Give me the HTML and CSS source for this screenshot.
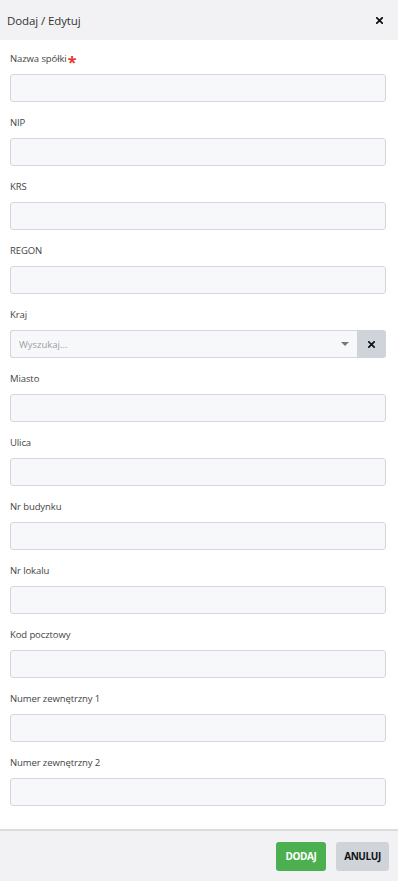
FILE: index.html
```html
<!DOCTYPE html>
<html lang="pl">
<head>
<meta charset="utf-8">
<title>Dodaj / Edytuj</title>
<link rel="stylesheet" href="styles.css">
</head>
<body>
<div class="modal">
  <div class="modal-header">
    <span class="modal-title">Dodaj / Edytuj</span>
    <button class="close-btn" aria-label="Zamknij">
      <svg width="7" height="7" viewBox="0 0 7 7"><path d="M0.8 0.8L6.2 6.2M6.2 0.8L0.8 6.2" stroke="#111" stroke-width="1.8" stroke-linecap="square"/></svg>
    </button>
  </div>
  <div class="modal-body">
    <div class="field"><label class="label">Nazwa spółki<span class="req">*</span></label><input class="input" type="text"></div>
    <div class="field"><label class="label">NIP</label><input class="input" type="text"></div>
    <div class="field"><label class="label">KRS</label><input class="input" type="text"></div>
    <div class="field"><label class="label">REGON</label><input class="input" type="text"></div>
    <div class="field"><label class="label">Kraj</label>
      <div class="select">
        <div class="select-box">
          <span class="placeholder">Wyszukaj...</span>
          <span class="caret"></span>
        </div>
        <button class="select-clear" aria-label="Wyczyść">
          <svg width="7" height="7" viewBox="0 0 7 7"><path d="M0.8 0.8L6.2 6.2M6.2 0.8L0.8 6.2" stroke="#111" stroke-width="1.7" stroke-linecap="square"/></svg>
        </button>
      </div>
    </div>
    <div class="field"><label class="label">Miasto</label><input class="input" type="text"></div>
    <div class="field"><label class="label">Ulica</label><input class="input" type="text"></div>
    <div class="field"><label class="label">Nr budynku</label><input class="input" type="text"></div>
    <div class="field"><label class="label">Nr lokalu</label><input class="input" type="text"></div>
    <div class="field"><label class="label">Kod pocztowy</label><input class="input" type="text"></div>
    <div class="field"><label class="label">Numer zewnętrzny 1</label><input class="input" type="text"></div>
    <div class="field"><label class="label">Numer zewnętrzny 2</label><input class="input" type="text"></div>
  </div>
  <div class="modal-footer">
    <button class="btn btn-primary">DODAJ</button>
    <button class="btn btn-secondary">ANULUJ</button>
  </div>
</div>
</body>
</html>
```
FILE: styles.css
```css
* { box-sizing: border-box; }
html, body { margin: 0; padding: 0; background: #fff; }
body { font-family: "Open Sans", "Noto Sans", sans-serif; color: #333; }

.modal { width: 398px; display: flex; flex-direction: column; }

.modal-header {
  height: 40px;
  background: #f2f2f4;
  display: flex;
  align-items: center;
  justify-content: space-between;
  padding: 0 15px 0 7px;
}
.modal-title { font-size: 11.5px; color: #333; letter-spacing: -0.1px; }
.close-btn {
  border: 0; background: none; padding: 0; width: 7px; height: 7px;
  display: flex; align-items: center; justify-content: center; cursor: pointer;
}

.modal-body { padding: 12px 12px 9px 10px; }

.field { display: flex; flex-direction: column; margin-bottom: 14px; }
.label {
  font-size: 9.5px; line-height: 14px; height: 14px; color: #444;
  margin-bottom: 8px; letter-spacing: -0.1px;
  display: flex; align-items: center;
}
.req {
  color: #e8322d; font-weight: 700; font-size: 16px; margin-left: 1px;
  line-height: 14px; height: 14px; display: inline-block; transform: translateY(3px);
}

.input {
  height: 28px; width: 100%;
  background: #f7f8fa;
  border: 1px solid #d3d7dd;
  border-radius: 3px;
  outline: none;
  font-family: inherit;
}

.select { display: flex; height: 28px; }
.select-box {
  flex: 1;
  background: #f7f8fa;
  border: 1px solid #d3d7dd;
  border-right: 0;
  border-radius: 3px 0 0 3px;
  display: flex; align-items: center; justify-content: space-between;
  padding: 0 8px 0 8px;
}
.placeholder { font-size: 9.5px; color: #9a9ea5; }
.caret {
  width: 0; height: 0;
  border-left: 4px solid transparent;
  border-right: 4px solid transparent;
  border-top: 4px solid #777;
}
.select-clear {
  width: 29px; border: 0; padding: 0;
  background: #cfd3da;
  border-radius: 0 3px 3px 0;
  display: flex; align-items: center; justify-content: center;
}

.modal-footer {
  height: 52px;
  background: #f2f2f4;
  border-top: 2px solid #dcdcdf;
  display: flex; align-items: center; justify-content: flex-end;
  gap: 10px;
  padding: 0 9px 0 0;
}
.btn {
  height: 29px; border: 0; border-radius: 3px;
  font-family: "Open Sans", sans-serif; font-size: 10px; font-weight: 700;
  letter-spacing: -0.4px;
  cursor: pointer;
}
.btn-primary { background: #4caf50; color: #fff; width: 50px; }
.btn-secondary { background: #cfd3da; color: #111; width: 53px; }
```
